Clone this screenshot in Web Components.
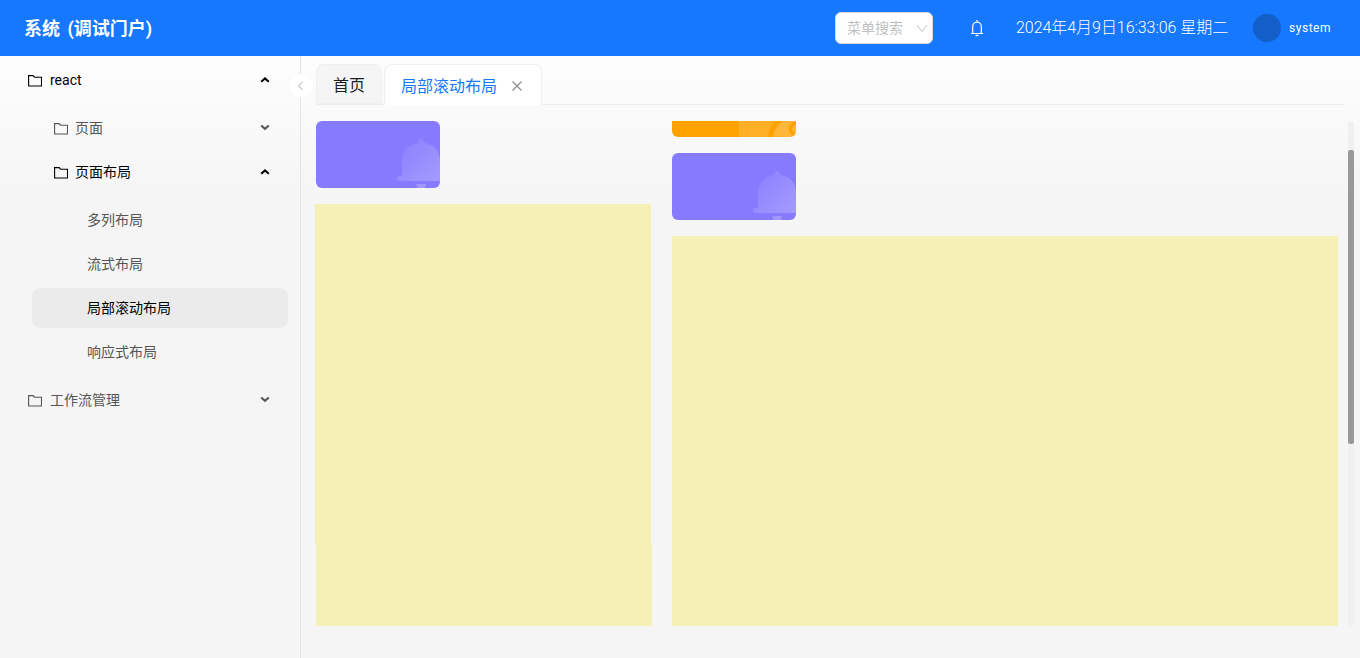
<!DOCTYPE html>
<html>
<head>
<meta charset="utf-8">
<title>局部滚动布局</title>
<style>
  html, body { margin: 0; height: 100%; }
  body {
    font-family: Roboto, "Noto Sans CJK SC", sans-serif;
    background: #f5f5f5;
    overflow: hidden;
  }
</style>
</head>
<body>
<app-shell>
  <app-header slot="header"></app-header>
  <side-menu slot="side"></side-menu>
  <tab-bar slot="tabs"></tab-bar>
  <scroll-layout slot="main"></scroll-layout>
</app-shell>

<script>
const FOLDER = `<svg class="folder" viewBox="0 0 14 14" width="14" height="14" fill="none" stroke="currentColor" stroke-width="1.1"><path d="M.6 2.600h4.600l1.300 1.600h7V13H.6z"/></svg>`;
const UP = `<svg viewBox="0 0 10 10" width="10" height="10" fill="none" stroke="currentColor" stroke-width="2"><path d="M1.200 6.800L5 3.400l3.800 3.400"/></svg>`;
const DOWN = `<svg viewBox="0 0 10 10" width="10" height="10" fill="none" stroke="currentColor" stroke-width="2"><path d="M1.200 3.400L5 6.800l3.800-3.400"/></svg>`;

class AppShell extends HTMLElement {
  constructor() {
    super();
    this.attachShadow({ mode: 'open' });
    this.shadowRoot.innerHTML = `
      <style>
        :host {
          display: grid;
          grid-template-columns: 301px 1fr;
          grid-template-rows: 56px 1fr;
          height: 658px;
          background: linear-gradient(180deg, #fdfdfd 56px, #f5f5f5 200px);
        }
        .head { grid-column: 1 / 3; }
        .side { border-right: 1px solid #e4e4e4; position: relative; min-height: 0; }
        .collapse {
          position: absolute;
          z-index: 2;
          top: 18px;
          right: -13px;
          width: 24px;
          height: 24px;
          border-radius: 50%;
          background: #fff;
          box-shadow: 0 0 2px rgba(0, 0, 0, .04);
          display: flex;
          align-items: center;
          justify-content: center;
          color: #bbb;
        }
        .main { display: flex; flex-direction: column; min-width: 0; min-height: 0; }
      </style>
      <div class="head"><slot name="header"></slot></div>
      <div class="side">
        <slot name="side"></slot>
        <div class="collapse">
          <svg viewBox="0 0 10 10" width="10" height="10" fill="none" stroke="currentColor" stroke-width="1.1"><path d="M6.500 1L2.800 5l3.700 4"/></svg>
        </div>
      </div>
      <div class="main">
        <slot name="tabs"></slot>
        <slot name="main"></slot>
      </div>
    `;
  }
}

class AppHeader extends HTMLElement {
  constructor() {
    super();
    this.attachShadow({ mode: 'open' });
    this.shadowRoot.innerHTML = `
      <style>
        :host {
          display: flex;
          align-items: center;
          height: 56px;
          padding: 0 29px 0 24px;
          background: #1677ff;
          color: #fff;
          box-sizing: border-box;
          line-height: 20px;
        }
        .title { font-size: 18px; font-weight: 700; flex: 1; word-spacing: 3px; padding-top: 2px; }
        .search {
          width: 98px;
          height: 32px;
          box-sizing: border-box;
          background: #fff;
          border: 1px solid #d9d9d9;
          border-radius: 6px;
          display: flex;
          align-items: center;
          justify-content: space-between;
          padding: 0 4px 0 11px;
          color: #bfbfbf;
          font-size: 14px;
        }
        .bell { margin-left: 36px; display: flex; }
        .time { margin-left: 31px; font-size: 16px; font-weight: 300; letter-spacing: -.05px; }
        .avatar { margin-left: 25px; width: 28px; height: 28px; border-radius: 50%; background: #125fc9; }
        .user { margin-left: 8px; font-size: 12px; letter-spacing: .5px; }
      </style>
      <div class="title">系统 (调试门户)</div>
      <div class="search">
        <span>菜单搜索</span>
        <svg viewBox="0 0 12 12" width="12" height="12" fill="none" stroke="#bfbfbf" stroke-width="1"><path d="M1 3l5 6.500L11 3"/></svg>
      </div>
      <div class="bell">
        <svg viewBox="0 0 16 18" width="16" height="18" fill="none" stroke="#fff" stroke-width="1.200"><path d="M2 14.500h12M3.700 14.500V7.500a4.300 4.300 0 0 1 8.600 0v7M8 1v2"/><path d="M6.500 16.500h3"/></svg>
      </div>
      <div class="time">2024年4月9日16:33:06 星期二</div>
      <div class="avatar"></div>
      <div class="user">system</div>
    `;
  }
}

class SideMenu extends HTMLElement {
  constructor() {
    super();
    this.attachShadow({ mode: 'open' });
    this.shadowRoot.innerHTML = `
      <style>
        :host { display: block; padding: 4px 12px 0 4px; font-size: 14px; line-height: 20px; color: #555; }
        .row {
          height: 40px;
          display: flex;
          align-items: center;
          border-radius: 8px;
          position: relative;
        }
        .folder { flex: none; display: block; }
        .l1 { padding-left: 24px; gap: 8px; }
        .l2 { padding-left: 50px; gap: 7px; margin-top: 8px; }
        .l2.next { margin-top: 4px; }
        .l3 { padding-left: 83px; margin-top: 4px; }
        .l3.first { margin-top: 8px; }
        .l1.last { margin-top: 8px; }
        .open { color: #000; }
        .sel { color: #000; background: #ebebeb; margin-left: 28px; padding-left: 55px; }
        .arrow { position: absolute; left: 256px; top: 15px; width: 10px; height: 10px; display: flex; }
        .arrow.down { top: 14px; }
      </style>
      <div class="row l1 open">${FOLDER}<span>react</span><span class="arrow">${UP}</span></div>
      <div class="row l2">${FOLDER}<span>页面</span><span class="arrow down">${DOWN}</span></div>
      <div class="row l2 next open">${FOLDER}<span>页面布局</span><span class="arrow">${UP}</span></div>
      <div class="row l3 first">多列布局</div>
      <div class="row l3">流式布局</div>
      <div class="row l3 sel">局部滚动布局</div>
      <div class="row l3">响应式布局</div>
      <div class="row l1 last">${FOLDER}<span>工作流管理</span><span class="arrow down">${DOWN}</span></div>
    `;
  }
}

class TabBar extends HTMLElement {
  constructor() {
    super();
    this.attachShadow({ mode: 'open' });
    this.shadowRoot.innerHTML = `
      <style>
        :host {
          display: flex;
          gap: 2px;
          height: 41px;
          box-sizing: border-box;
          margin: 8px 16px 0 15px;
          border-bottom: 1px solid #eeeeee;
          line-height: 22px;
        }
        .tab {
          height: 40px;
          box-sizing: border-box;
          border: 1px solid #efefef;
          border-radius: 8px 8px 0 0;
          display: flex;
          align-items: center;
          padding: 4px 16px 0;
          font-size: 16px;
          background: #f5f5f5;
          color: #1f1f1f;
        }
        .active {
          background: #fff;
          color: #1677ff;
          height: 41px;
          border-bottom: 0;
          gap: 14px;
          padding-right: 18px;
        }
        .close { display: flex; margin-top: -2px; }
      </style>
      <div class="tab">首页</div>
      <div class="tab active">
        <span>局部滚动布局</span>
        <span class="close"><svg viewBox="0 0 12 12" width="12" height="12" fill="none" stroke="#8c8c8c" stroke-width="1.200"><path d="M1.500 1.500l9 9M10.500 1.500l-9 9"/></svg></span>
      </div>
    `;
  }
}

class StatCard extends HTMLElement {
  constructor() {
    super();
    this.attachShadow({ mode: 'open' });
    const kind = this.getAttribute('kind');
    const deco = kind === 'orange'
      ? `<svg class="deco orange" viewBox="0 0 57 67" width="57" height="67">
           <rect width="57" height="67" fill="#fff" fill-opacity=".14"/>
           <circle cx="56.500" cy="69.500" r="25" fill="#fff" fill-opacity=".1" stroke="#ffa200" stroke-width="5"/>
           <circle cx="57" cy="59" r="5.500" fill="none" stroke="#ffa200" stroke-width="3.500"/>
         </svg>`
      : `<svg class="deco purple" viewBox="0 0 48 49" width="48" height="49">
           <defs><linearGradient id="g" x1="0" y1="0" x2="1" y2="1">
             <stop offset="0" stop-color="#fff" stop-opacity=".02"/>
             <stop offset="1" stop-color="#fff" stop-opacity=".28"/>
           </linearGradient></defs>
           <path fill="url(#g)" d="M21 4c0-3 2-4 3-4s3 1 3 4c10 1 16 8 16 18v15H5V22C5 12 11 5 21 4zM2.500 37h43a2.500 2.500 0 0 1 0 5h-43a2.500 2.500 0 0 1 0-5zM19 45h10l-1.500 4h-7z"/>
         </svg>`;
    this.shadowRoot.innerHTML = `
      <style>
        :host {
          display: block;
          position: relative;
          overflow: hidden;
          flex: none;
          width: 124px;
          height: 67px;
          border-radius: 6px;
          background: ${kind === 'orange' ? '#ffa200' : '#867bff'};
        }
        .deco { position: absolute; display: block; }
        .orange { left: 67px; top: 0; }
        .purple { left: 81px; top: 18px; }
      </style>
      ${deco}
    `;
  }
}

class ScrollLayout extends HTMLElement {
  constructor() {
    super();
    this.attachShadow({ mode: 'open' });
    this.shadowRoot.innerHTML = `
      <style>
        :host {
          display: flex;
          height: 505px;
          margin: 16px 6px 0 14px;
        }
        .col { display: flex; flex-direction: column; gap: 16px; overflow: hidden; }
        .left { width: 337px; flex: none; margin-right: 20px; }
        .left stat-card { margin-left: 1px; }
        .right { flex: 1; min-width: 0; margin-right: 10px; }
        .stack { display: flex; flex-direction: column; flex: none; }
        .yellow { background: #f5f0b5; flex: none; }
        .a { width: 336px; height: 340px; }
        .b { width: 336px; height: 82px; margin-left: 1px; }
        .right .yellow { height: 702px; }
        .track { flex: none; width: 6px; background: #f0f0f0; border-radius: 3px; }
        .thumb { width: 6px; height: 294px; margin-top: 29px; background: #999; border-radius: 2px; }
      </style>
      <div class="col left">
        <stat-card kind="purple"></stat-card>
        <div class="stack">
          <div class="yellow a"></div>
          <div class="yellow b"></div>
        </div>
      </div>
      <div class="col right">
        <stat-card kind="orange"></stat-card>
        <stat-card kind="purple"></stat-card>
        <div class="yellow"></div>
      </div>
      <div class="track"><div class="thumb"></div></div>
    `;
  }
  connectedCallback() {
    this.shadowRoot.querySelector('.right').scrollTop = 51;
  }
}

customElements.define('stat-card', StatCard);
customElements.define('app-shell', AppShell);
customElements.define('app-header', AppHeader);
customElements.define('side-menu', SideMenu);
customElements.define('tab-bar', TabBar);
customElements.define('scroll-layout', ScrollLayout);
</script>
</body>
</html>
